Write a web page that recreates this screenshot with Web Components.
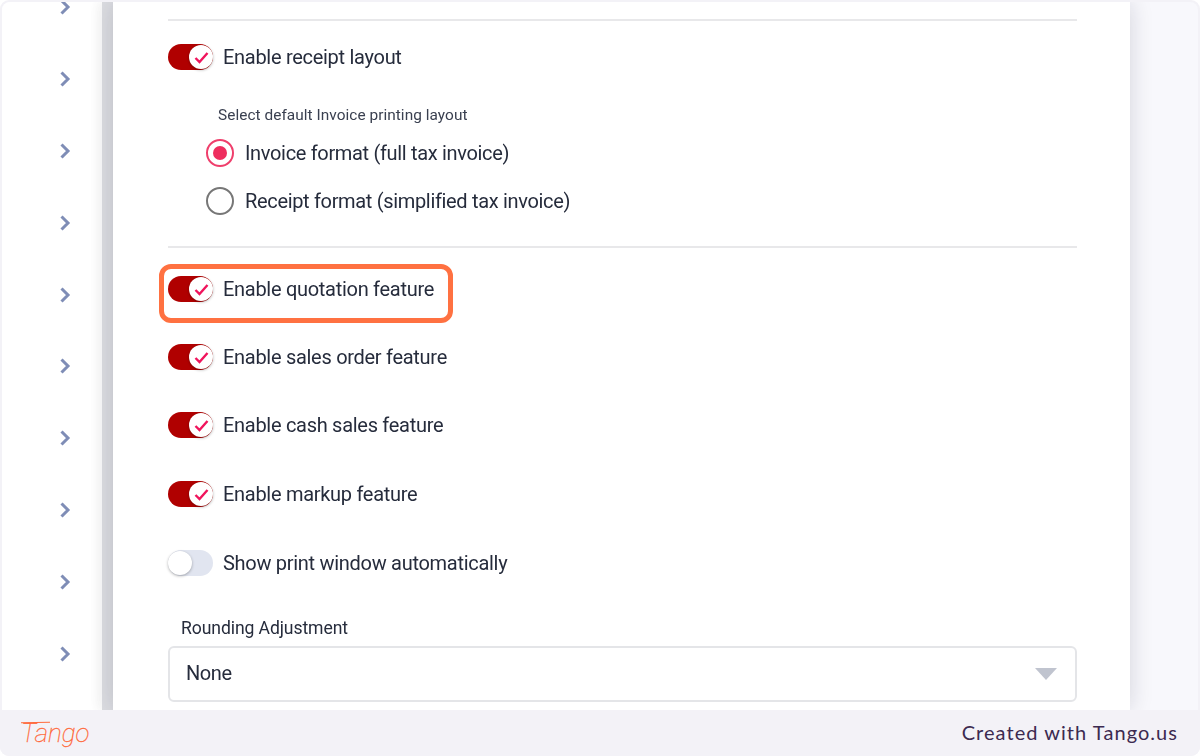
<!DOCTYPE html>
<html lang="en"><head><meta charset="utf-8"><title>Settings</title>
<style>
html,body{margin:0;height:756px;overflow:hidden;background:#fff;}
body{font-family:Roboto,"Liberation Sans",sans-serif;}
</style></head>
<body>
<tango-frame>
  <side-rail slot="rail"></side-rail>
  <settings-panel slot="panel">
    <panel-rule style="margin-top:17px"></panel-rule>
    <toggle-row on style="margin-top:2px">Enable receipt layout</toggle-row>
    <sub-caption>Select default Invoice printing layout</sub-caption>
    <radio-row on>Invoice format (full tax invoice)</radio-row>
    <radio-row>Receipt format (simplified tax invoice)</radio-row>
    <panel-rule style="margin-top:21px;margin-bottom:7px"></panel-rule>
    <toggle-row on highlight>Enable quotation feature</toggle-row>
    <toggle-row on>Enable sales order feature</toggle-row>
    <toggle-row on>Enable cash sales feature</toggle-row>
    <toggle-row on style="margin-top:1px">Enable markup feature</toggle-row>
    <toggle-row style="margin-top:1px">Show print window automatically</toggle-row>
    <select-field label="Rounding Adjustment" value="None"></select-field>
  </settings-panel>
  <tango-footer slot="footer"></tango-footer>
</tango-frame>
<script>
function el(name, html, setup){
  customElements.define(name, class extends HTMLElement{
    constructor(){super();this.attachShadow({mode:'open'}).innerHTML=typeof html==='function'?html(this):html;}
    connectedCallback(){ if(setup) setup(this); }
  });
}
el('tango-frame',`<style>
:host{display:grid;grid-template-rows:708px 46px;height:756px;box-sizing:border-box;padding-top:2px;background:#f3f2f7;border-radius:9px;overflow:hidden}
.screen{display:grid;grid-template-columns:100px 11px 1017px 1fr;margin:0 2px;background:#f8f8fc;border-radius:8px 8px 0 0;overflow:hidden;min-height:0;filter:blur(.45px)}
.strip{background:#dcdde1;box-shadow:-6px 0 8px rgba(0,0,0,.03)}
.panelwrap{min-height:0;overflow:hidden;background:#fff;box-shadow:0 0 22px rgba(20,20,50,.16);position:relative}
</style>
<div class="screen"><slot name="rail"></slot><div class="strip"></div><div class="panelwrap"><slot name="panel"></slot></div><div></div></div>
<slot name="footer"></slot>`);
el('side-rail',()=>{let r='';for(let i=0;i<10;i++)r+=`<div class="r"><svg width="12" height="18" viewBox="0 0 12 18"><path d="M2.5 2.5 L9 9 L2.5 15.5" fill="none" stroke="#7f8db6" stroke-width="3"/></svg></div>`;
return `<style>:host{display:block;background:#fff;overflow:hidden;min-height:0}
.list{margin-top:-31px;padding-left:57px}
.r{height:71.9px;display:flex;align-items:center}
svg{display:block}</style><div class="list">${r}</div>`;});
el('settings-panel',`<style>:host{display:block;padding:0 53px 0 55px;color:#262c3c}</style><slot></slot>`);
el('panel-rule',`<style>:host{display:block;height:2px;background:#e8e8ea}</style>`);
el('toggle-row',self=>{const on=self.hasAttribute('on');const hl=self.hasAttribute('highlight');
return `<style>
:host{display:flex;align-items:center;height:68px;gap:10px;position:relative;font-size:20px;letter-spacing:-.29px;color:#262c3c}
.t{width:45px;height:26px;border-radius:13px;background:${on?'#b00000':'#e1e5f0'};position:relative;flex:none}
.k{position:absolute;top:1px;${on?'right:0':'left:0'};width:24px;height:24px;border-radius:50%;background:#fff;box-shadow:0 1px 3px rgba(0,0,0,.3);display:flex;align-items:center;justify-content:center}
.h{position:absolute;left:-9px;top:9px;width:294px;height:59px;box-sizing:border-box;border:5px solid #ff7141;border-radius:12px}
svg{display:block}
</style><span class="t"><span class="k">${on?'<svg width="15" height="13" viewBox="0 0 15 13"><path d="M1.5 7 L5.5 11 L13.5 2" fill="none" stroke="#f0145c" stroke-width="2.4"/></svg>':''}</span></span><span><slot></slot></span>${hl?'<span class="h"></span>':''}`;});
el('sub-caption',`<style>:host{display:block;margin:0 0 0 50px;height:38px;line-height:48px;font-size:15.4px;letter-spacing:.05px;color:#3a4050}</style><slot></slot>`);
el('radio-row',self=>{const on=self.hasAttribute('on');
return `<style>
:host{display:flex;align-items:center;height:48px;margin-left:38px;gap:11px;font-size:20px;letter-spacing:-.33px;color:#262c3c}
.c{width:28px;height:28px;box-sizing:border-box;border-radius:50%;border:2px solid ${on?'#ef3f6c':'#777'};display:flex;align-items:center;justify-content:center;flex:none}
.d{width:14px;height:14px;border-radius:50%;background:#ee2d5e}
</style><span class="c">${on?'<span class="d"></span>':''}</span><span><slot></slot></span>`;});
el('select-field',self=>`<style>
:host{display:block;margin-top:18px}
.l{margin-left:13px;font-size:17.6px;letter-spacing:-.1px;height:31px;line-height:26px;color:#262c3c}
.b{height:56px;box-sizing:border-box;border:2px solid #e4e5e8;border-radius:6px;display:flex;align-items:center;justify-content:space-between;padding:0 18px 2px 16px;font-size:20px;letter-spacing:-.4px;color:#262c3c}
.a{width:0;height:0;border-left:11px solid transparent;border-right:11px solid transparent;border-top:12px solid #c0c4cf;margin-top:2px}
</style><div class="l">${self.getAttribute('label')}</div><div class="b"><span>${self.getAttribute('value')}</span><span class="a"></span></div>`);
el('tango-footer',`<style>
:host{display:flex;align-items:center;justify-content:space-between;height:46px;padding:0 22px 2px 21px;box-sizing:border-box;background:#f3f2f7;color:#3c2a50}
.logo{font:italic 100 26px Roboto,sans-serif;color:#ff6a3c;line-height:1;position:relative;top:1px;-webkit-text-stroke:.3px #ff6a3c}
.logo::before{content:"";position:absolute;left:0;top:2px;width:29px;height:1px;background:#ff6a3c;transform:rotate(-1deg)}
.c{font:20px Lato,sans-serif;letter-spacing:1.05px;position:relative}
</style><span class="logo">Tango</span><span class="c">Created with Tango.us</span>`);
</script>
</body></html>
